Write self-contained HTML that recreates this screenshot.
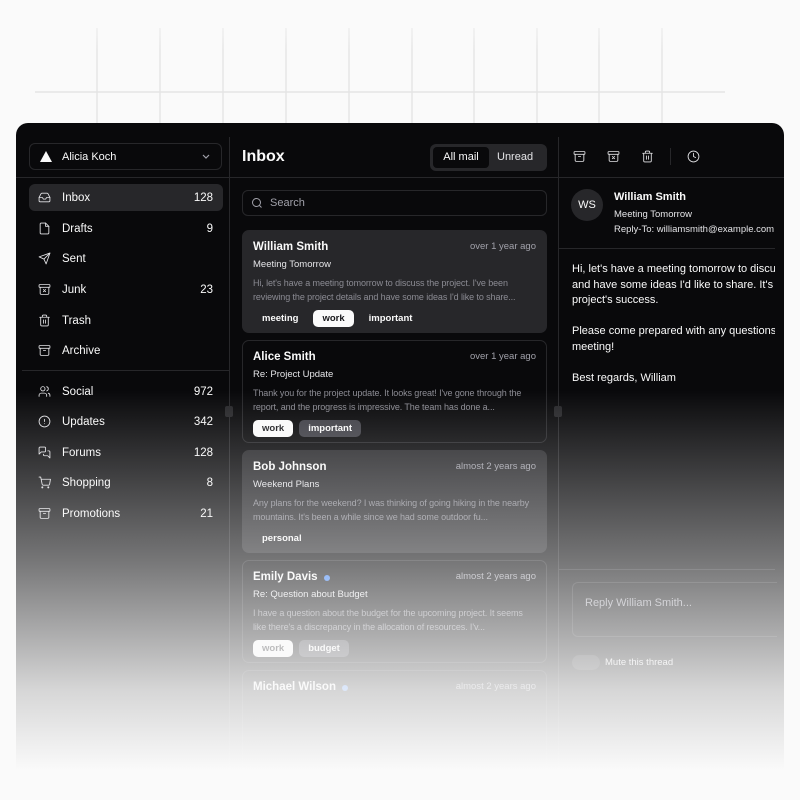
<!DOCTYPE html>
<html><head><style>
*{box-sizing:border-box;margin:0;padding:0}
body{width:800px;height:800px;background:#fafafa;position:relative;overflow:hidden;font-family:"Liberation Sans",sans-serif;color:#fafafa}
.grid{position:absolute;left:0;top:0;width:800px;height:130px}
.win{position:absolute;left:16px;top:123px;width:768px;height:660px;background:#09090b;border-radius:12px;overflow:hidden}
.abs{position:absolute}
.vl{position:absolute;top:14px;bottom:0;width:1px;background:#27272a}
.hl{position:absolute;height:1px;background:#27272a}
.nav{position:absolute;left:13px;width:194px;height:27px;border-radius:6px;font-size:11.5px;display:flex;align-items:center;padding:0 10px 0 9px}
.nav svg{width:13px;height:13px;margin-right:11px;fill:none;stroke:#e4e4e7;stroke-width:1.6;stroke-linecap:round;stroke-linejoin:round}
.nav .c{margin-left:auto}
.card{position:absolute;left:226px;width:305px;height:103px;border:1px solid #27272a;border-radius:7px;padding:10px 10px}
.card .n{font-size:11.5px;font-weight:bold;display:flex}
.card .t{margin-left:auto;font-size:9.5px;font-weight:normal;color:#a1a1aa}
.card .s{font-size:9.5px;margin-top:6px;color:#e4e4e7}
.card .p{font-size:9px;color:#8b8b93;margin-top:7px;line-height:13.5px;height:27px;overflow:hidden;display:-webkit-box;-webkit-line-clamp:2;-webkit-box-orient:vertical;letter-spacing:-0.1px}
.tags{margin-top:6px;display:flex;gap:6px}
.tag{font-size:9.5px;font-weight:bold;padding:3px 9px;border-radius:5px;background:#3f3f46;color:#fafafa}
.tag.w{background:#fafafa;color:#18181b}
.tag.g{background:transparent}
.ic{position:absolute;top:27px;width:13px;height:13px;fill:none;stroke:#e4e4e7;stroke-width:1.6;stroke-linecap:round;stroke-linejoin:round}
.fade{position:absolute;left:0;top:0;width:800px;height:800px;background:linear-gradient(to bottom,rgba(250,250,250,0) 0px,rgba(250,250,250,0) 390px,rgba(250,250,250,0.45) 560px,rgba(250,250,250,0.85) 690px,rgba(250,250,250,1) 770px)}
</style></head><body>
<svg class="grid" viewBox="0 0 800 130">
<g stroke="#e6e6e6" stroke-width="1.5">
<line x1="97" y1="28" x2="97" y2="130"/><line x1="160" y1="28" x2="160" y2="130"/><line x1="223" y1="28" x2="223" y2="130"/><line x1="286" y1="28" x2="286" y2="130"/><line x1="349" y1="28" x2="349" y2="130"/><line x1="412" y1="28" x2="412" y2="130"/><line x1="474" y1="28" x2="474" y2="130"/><line x1="537" y1="28" x2="537" y2="130"/><line x1="599" y1="28" x2="599" y2="130"/><line x1="662" y1="28" x2="662" y2="130"/>
</g>
<rect x="0" y="0" width="800" height="50" fill="url(#fd)"/>
<defs><linearGradient id="fd" x1="0" y1="0" x2="0" y2="1"><stop offset="0" stop-color="#fafafa"/><stop offset="1" stop-color="#fafafa" stop-opacity="0"/></linearGradient></defs>
<line x1="35" y1="92" x2="725" y2="92" stroke="#e4e4e4" stroke-width="1.5"/>
</svg>
<div class="win">
<div class="vl" style="left:213px"></div>
<div class="vl" style="left:542px"></div>
<div class="hl" style="left:0;top:54px;width:768px"></div>
<div class="hl" style="left:6px;top:247px;width:207px"></div>
<div class="hl" style="left:542px;top:125px;width:217px"></div>
<div class="hl" style="left:542px;top:446px;width:217px"></div>
<div class="abs" style="left:209px;top:283px;width:8px;height:11px;background:#27272a;border-radius:2px"></div>
<div class="abs" style="left:538px;top:283px;width:8px;height:11px;background:#27272a;border-radius:2px"></div>
<div class="abs" style="left:13px;top:20px;width:193px;height:27px;border:1px solid #27272a;border-radius:6px;font-size:11px;display:flex;align-items:center;padding-left:10px">
<svg width="12" height="11" viewBox="0 0 12 11"><path d="M6 0L12 11H0Z" fill="#fafafa"/></svg>
<span style="margin-left:10px">Alicia Koch</span>
<svg style="margin-left:auto;margin-right:11px" width="8" height="5" viewBox="0 0 8 5"><path d="M1 1l3 3 3-3" stroke="#a1a1aa" fill="none" stroke-width="1.2"/></svg>
</div>
<div class="nav" style="top:61px;background:#27272a"><svg viewBox="0 0 24 24"><path d="M22 12h-6l-2 3h-4l-2-3H2"/><path d="M5.45 5.11L2 12v6a2 2 0 002 2h16a2 2 0 002-2v-6l-3.45-6.89A2 2 0 0016.76 4H7.24a2 2 0 00-1.790 1.11z"/></svg>Inbox<span class="c">128</span></div>
<div class="nav" style="top:92px"><svg viewBox="0 0 24 24"><path d="M14 2H6a2 2 0 00-2 2v16a2 2 0 002 2h12a2 2 0 002-2V8z"/><path d="M14 2v6h6"/></svg>Drafts<span class="c">9</span></div>
<div class="nav" style="top:122px"><svg viewBox="0 0 24 24"><path d="M22 2L11 13"/><path d="M22 2l-7 20-4-9-9-4z"/></svg>Sent</div>
<div class="nav" style="top:153px"><svg viewBox="0 0 24 24"><rect x="2" y="3" width="20" height="5" rx="1"/><path d="M4 8v11a2 2 0 002 2h12a2 2 0 002-2V8"/><path d="M10 12l4 4M14 12l-4 4"/></svg>Junk<span class="c">23</span></div>
<div class="nav" style="top:184px"><svg viewBox="0 0 24 24"><path d="M3 6h18M19 6v14a2 2 0 01-2 2H7a2 2 0 01-2-2V6M8 6V4a2 2 0 012-2h4a2 2 0 012 2v2M10 11v6M14 11v6"/></svg>Trash</div>
<div class="nav" style="top:214px"><svg viewBox="0 0 24 24"><rect x="2" y="3" width="20" height="5" rx="1"/><path d="M4 8v11a2 2 0 002 2h12a2 2 0 002-2V8M10 12h4"/></svg>Archive</div>
<div class="nav" style="top:255px"><svg viewBox="0 0 24 24"><circle cx="9" cy="7" r="4"/><path d="M2 21v-2a4 4 0 014-4h6a4 4 0 014 4v2M16 3.13a4 4 0 010 7.75M22 21v-2a4 4 0 00-3-3.87"/></svg>Social<span class="c">972</span></div>
<div class="nav" style="top:285px"><svg viewBox="0 0 24 24"><circle cx="12" cy="12" r="10"/><path d="M12 8v4M12 16h.01"/></svg>Updates<span class="c">342</span></div>
<div class="nav" style="top:316px"><svg viewBox="0 0 24 24"><path d="M14 9a2 2 0 01-2 2H6l-4 4V4a2 2 0 012-2h8a2 2 0 012 2z"/><path d="M18 9h2a2 2 0 012 2v11l-4-4h-6a2 2 0 01-2-2v-1"/></svg>Forums<span class="c">128</span></div>
<div class="nav" style="top:346px"><svg viewBox="0 0 24 24"><circle cx="8" cy="21" r="1"/><circle cx="19" cy="21" r="1"/><path d="M2 2h3l2.7 13.4a2 2 0 002 1.6h9.7a2 2 0 002-1.6L23 6H6"/></svg>Shopping<span class="c">8</span></div>
<div class="nav" style="top:377px"><svg viewBox="0 0 24 24"><rect x="2" y="3" width="20" height="5" rx="1"/><path d="M4 8v11a2 2 0 002 2h12a2 2 0 002-2V8M10 12h4"/></svg>Promotions<span class="c">21</span></div>
<div class="abs" style="left:226px;top:25px;font-size:16px;font-weight:bold">Inbox</div>
<div class="abs" style="left:414px;top:21px;width:117px;height:27px;background:#27272a;border-radius:6px;font-size:11px">
<div class="abs" style="left:3px;top:3px;width:56px;height:21px;background:#09090b;border-radius:4px;text-align:center;line-height:21px">All mail</div>
<div class="abs" style="left:67px;top:3px;line-height:21px;color:#e4e4e7">Unread</div>
</div>
<div class="abs" style="left:226px;top:67px;width:305px;height:26px;border:1px solid #27272a;border-radius:6px;font-size:11px;color:#a1a1aa;display:flex;align-items:center;padding-left:8px">
<svg width="12" height="12" viewBox="0 0 24 24" fill="none" stroke="#a1a1aa" stroke-width="2"><circle cx="11" cy="11" r="8"/><path d="M21 21l-4.3-4.3"/></svg><span style="margin-left:7px">Search</span></div>
<div class="card" style="top:107px;background:#27272a"><div class="n">William Smith<span class="t">over 1 year ago</span></div><div class="s">Meeting Tomorrow</div><div class="p">Hi, let's have a meeting tomorrow to discuss the project. I've been reviewing the project details and have some ideas I'd like to share...</div><div class="tags"><span class="tag g">meeting</span><span class="tag w">work</span><span class="tag g">important</span></div></div>
<div class="card" style="top:217px"><div class="n">Alice Smith<span class="t">over 1 year ago</span></div><div class="s">Re: Project Update</div><div class="p">Thank you for the project update. It looks great! I've gone through the report, and the progress is impressive. The team has done a...</div><div class="tags"><span class="tag w">work</span><span class="tag">important</span></div></div>
<div class="card" style="top:327px;background:#27272a"><div class="n">Bob Johnson<span class="t">almost 2 years ago</span></div><div class="s">Weekend Plans</div><div class="p">Any plans for the weekend? I was thinking of going hiking in the nearby mountains. It's been a while since we had some outdoor fu...</div><div class="tags"><span class="tag g">personal</span></div></div>
<div class="card" style="top:437px"><div class="n">Emily Davis<span style="display:inline-block;width:6px;height:6px;border-radius:50%;background:#3b82f6;margin:4px 0 0 6px"></span><span class="t">almost 2 years ago</span></div><div class="s">Re: Question about Budget</div><div class="p">I have a question about the budget for the upcoming project. It seems like there's a discrepancy in the allocation of resources. I'v...</div><div class="tags"><span class="tag w">work</span><span class="tag">budget</span></div></div>
<div class="card" style="top:547px"><div class="n">Michael Wilson<span style="display:inline-block;width:6px;height:6px;border-radius:50%;background:#3b82f6;margin:4px 0 0 6px"></span><span class="t">almost 2 years ago</span></div></div>
<svg class="ic" style="left:557px" viewBox="0 0 24 24"><rect x="2" y="3" width="20" height="5" rx="1"/><path d="M4 8v11a2 2 0 002 2h12a2 2 0 002-2V8M10 12h4"/></svg>
<svg class="ic" style="left:591px" viewBox="0 0 24 24"><rect x="2" y="3" width="20" height="5" rx="1"/><path d="M4 8v11a2 2 0 002 2h12a2 2 0 002-2V8M10 12l4 4M14 12l-4 4"/></svg>
<svg class="ic" style="left:625px" viewBox="0 0 24 24"><path d="M3 6h18M19 6v14a2 2 0 01-2 2H7a2 2 0 01-2-2V6M8 6V4a2 2 0 012-2h4a2 2 0 012 2v2M10 11v6M14 11v6"/></svg>
<div class="abs" style="left:654px;top:25px;width:1px;height:17px;background:#27272a"></div>
<svg class="ic" style="left:671px" viewBox="0 0 24 24"><circle cx="12" cy="12" r="10"/><path d="M12 6v6l4 2"/></svg>
<div class="abs" style="left:555px;top:66px;width:32px;height:32px;border-radius:50%;background:#27272a;font-size:11px;text-align:center;line-height:32px">WS</div>
<div class="abs" style="left:598px;top:68px;font-size:11px;font-weight:bold">William Smith</div>
<div class="abs" style="left:598px;top:86px;font-size:9.5px;color:#e4e4e7">Meeting Tomorrow</div>
<div class="abs" style="left:598px;top:101px;font-size:9.5px;color:#e4e4e7;white-space:nowrap;width:161px;overflow:hidden">Reply-To: williamsmith@example.com</div>
<div class="abs" style="left:556px;top:139px;width:203px;overflow:hidden;font-size:11px;line-height:15.5px;white-space:nowrap;color:#fafafa">Hi, let's have a meeting tomorrow to discuss the project.<br>and have some ideas I'd like to share. It's crucial<br>project's success.<br><br>Please come prepared with any questions or insights<br>meeting!<br><br>Best regards, William</div>
<div class="abs" style="left:556px;top:459px;width:205px;height:55px;border:1px solid #27272a;border-right:none;border-radius:6px 0 0 6px;font-size:11px;color:#a1a1aa;padding:14px 12px">Reply William Smith...</div>
<div class="abs" style="left:556px;top:532px;width:28px;height:15px;border-radius:8px;background:#27272a"></div>
<div class="abs" style="left:589px;top:534px;font-size:9.5px;color:#e4e4e7">Mute this thread</div>
</div>
<div class="fade"></div>
</body></html>
